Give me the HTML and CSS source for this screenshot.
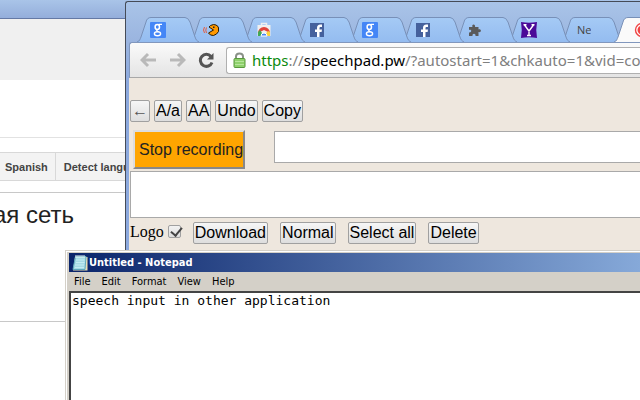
FILE: index.html
```html
<!DOCTYPE html>
<html lang="en">

<head>
    <meta charset="UTF-8" />
    <meta name="viewport" content="width=device-width, initial-scale=1.0" />
    <title>Speechpad</title>
    <link rel="stylesheet" href="styles.css">
</head>

<body>
    <svg class="defs" aria-hidden="true">
        <defs>
            <linearGradient id="tab-fill" x1="0" y1="0" x2="0" y2="1">
                <stop offset="0" stop-color="#a5caf5" />
                <stop offset="1" stop-color="#94bcf0" />
            </linearGradient>
            <symbol id="tab-shape" viewBox="0 0 62 25">
                <path d="M0 25C3 24 3 22 4 20L9 5Q10 .5 14 .5H48Q51 .5 53 5L58 20C59 23 60 24 62 25" />
            </symbol>
            <symbol id="google" viewBox="0 0 16 16">
                <rect width="16" height="16" rx="1" fill="#4486f6" />
                <g fill="none" stroke="#fff">
                    <ellipse cx="7.3" cy="4.9" rx="2.2" ry="2.5" stroke-width="1.5" />
                    <path d="M8.5 2.4H12M8 7.5C5.500 8.500 7 9.200 8.500 9.800" stroke-width="1.200" />
                    <ellipse cx="7.500" cy="11.700" rx="3.100" ry="2" stroke-width="1.400" />
                </g>
            </symbol>
            <symbol id="facebook" viewBox="0 0 16 16">
                <path d="M1 1H15V15H1Z" fill="#45619d" />
                <path d="M8 15V10H6V7.500H8V6C8 3.700 9.200 2.500 11.300 2.500H13V5H11.700C10.800 5 10.500 5.400 10.500 6.200V7.500H13L12.600 10H10.500V15Z" fill="#fff" />
            </symbol>
        </defs>
    </svg>

    <div class="desktop">
        <section class="window translator">
            <div class="translator-title"></div>
            <div class="translator-head"></div>
            <div class="translator-space"></div>
            <div class="languages">
                <button>Spanish</button>
                <button>Detect language</button>
            </div>
            <div class="translation">ая сеть</div>
        </section>

        <section class="window browser">
            <div class="tabs">
                <button class="tab" aria-label="Google"><svg class="shape"><use href="#tab-shape" /></svg><svg class="icon"><use href="#google" /></svg></button>
                <button class="tab" aria-label="Speech game"><svg class="shape"><use href="#tab-shape" /></svg><svg class="icon" viewBox="0 0 16 16">
                        <path d="M1.500 5Q-.5 8 1.500 11M3.500 5.500Q2 8 3.500 11" fill="none" stroke="#e65b3c" />
                        <path d="M15 4.500L13 3 10.500 2.500 7.500 3.500 6 5 10.500 8 5.500 11 7.500 13 10.500 13.500 13.500 12 15.500 9.500V6Z" fill="#f90" stroke="#2a1a00" />
                        <path d="M10 4.500H11.500V6H10Z" fill="#222" />
                    </svg></button>
                <button class="tab" aria-label="Web Store"><svg class="shape"><use href="#tab-shape" /></svg><svg class="icon" viewBox="0 0 16 16">
                        <path d="M5.500 3V1.500H10.500V3" fill="none" stroke="#eee" stroke-width="1.500" />
                        <path d="M1.500 3H14.500V14H1.500Z" fill="#f0f0f0" />
                        <path d="M2 11A6 6 0 0 1 14 11L8 8Z" fill="#e2453b" />
                        <path d="M2 14V10.500A6 6 0 0 1 4 8L8 14Z" fill="#42a854" />
                        <path d="M14 14V10A5 5 0 0 0 12 9L8 14Z" fill="#fbd13b" />
                        <path d="M5 14A3 3 0 0 1 11 14Z" fill="#4486f6" stroke="#fff" />
                    </svg></button>
                <button class="tab" aria-label="Facebook"><svg class="shape"><use href="#tab-shape" /></svg><svg class="icon"><use href="#facebook" /></svg></button>
                <button class="tab" aria-label="Google"><svg class="shape"><use href="#tab-shape" /></svg><svg class="icon"><use href="#google" /></svg></button>
                <button class="tab" aria-label="Facebook"><svg class="shape"><use href="#tab-shape" /></svg><svg class="icon"><use href="#facebook" /></svg></button>
                <button class="tab" aria-label="Extensions"><svg class="shape"><use href="#tab-shape" /></svg><svg class="icon" viewBox="0 0 16 16">
                        <path d="M1 5H4.500C3 1.500 8 1.500 7 5H10.500V7.500C13.500 6.500 14 11 10.500 10V14H7.500C8 11 4 11 4.500 14H1V10.500C4 11 4 7 1 8Z" fill="#5a5a5a" />
                    </svg></button>
                <button class="tab" aria-label="Yahoo"><svg class="shape"><use href="#tab-shape" /></svg><svg class="icon" viewBox="0 0 16 16">
                        <path d="M0 0Q8 1.500 16 0Q14.500 8 16 16Q8 14.500 0 16Q1.500 8 0 0Z" fill="#4b0a98" />
                        <path d="M3.500 3L8 9 12.500 3M8 8.500V13.500M2.500 2.800H5.500M10.500 2.800H13.500M6 13.500H10" fill="none" stroke="#fff" stroke-width="1.400" />
                    </svg></button>
                <button class="tab"><svg class="shape"><use href="#tab-shape" /></svg><span class="tab-text">New</span></button>
                <button class="tab active" aria-label="Speechpad"><svg class="shape"><use href="#tab-shape" /></svg><svg class="icon record" viewBox="0 0 16 16">
                        <circle cx="8" cy="8" r="6.500" fill="#fff" stroke="#f04444" stroke-width="1.400" />
                        <circle cx="8" cy="8" r="4.500" fill="#f04444" />
                    </svg></button>
            </div>

            <div class="navigation">
                <button class="nav" aria-label="Back"><svg viewBox="0 0 17 16"><path d="M16 8H2M8 2L2 8L8 14" /></svg></button>
                <button class="nav" aria-label="Forward"><svg viewBox="0 0 17 16"><path d="M1 8H15M9 2L15 8L9 14" /></svg></button>
                <button class="nav reload" aria-label="Reload"><svg viewBox="0 0 17 16"><path d="M13 4.500A6 6 0 1 0 14 10.500" /><path class="head" d="M15.500 1V7.500H9Z" /></svg></button>
                <div class="address">
                    <svg class="lock" viewBox="0 0 13 16">
                        <path d="M3 8V4.500Q3 1.500 6.500 1.500T10 4.500V8" fill="none" stroke="#8a9188" stroke-width="2" />
                        <rect x="1" y="6.500" width="11" height="9" rx="1" fill="#8fd16c" stroke="#58983d" />
                        <path d="M2 9.500H11M2 12.500H11" stroke="#b7e69c" />
                    </svg>
                    <div class="url" role="textbox" aria-label="Address" contenteditable="true" spellcheck="false"><span class="scheme">https</span>://<span class="host">speechpad.pw</span>/?autostart=1&amp;chkauto=1&amp;vid=co</div>
                </div>
            </div>

            <main class="page">
                <div class="row edit">
                    <button class="btn arrow">←</button>
                    <button class="btn">A/a</button>
                    <button class="btn">AA</button>
                    <button class="btn">Undo</button>
                    <button class="btn">Copy</button>
                </div>
                <div class="row record-row">
                    <button class="stop">Stop recording</button>
                    <input class="preview" type="text" aria-label="Recognized text">
                </div>
                <textarea class="result" aria-label="Result"></textarea>
                <div class="row actions">
                    <label class="logo">Logo <input type="checkbox" checked></label>
                    <button class="btn">Download</button>
                    <button class="btn">Normal</button>
                    <button class="btn">Select all</button>
                    <button class="btn">Delete</button>
                </div>
            </main>
        </section>

        <section class="window notepad">
            <div class="notepad-title">
                <svg class="notepad-icon" viewBox="0 0 16 16">
                    <path d="M3 2H15.500V15.500H1L3 2Z" fill="#e9dfb5" />
                    <path d="M3.500 1.500H14L13 14.500H1Z" fill="#a5dbe5" stroke="#5fa9bb" />
                    <path d="M4 5H12.500M4 7.500H12.500M3 10H12M3 12.500H12" stroke="#c4edf2" />
                    <path d="M4 0V3M6 0V3M8 0V3M10 0V3M12 0V3" stroke="#e8f4f5" />
                </svg>
                Untitled - Notepad
            </div>
            <div class="menu">
                <button>File</button>
                <button>Edit</button>
                <button>Format</button>
                <button>View</button>
                <button>Help</button>
            </div>
            <textarea class="document" aria-label="Document" spellcheck="false">speech input in other application</textarea>
        </section>
    </div>
</body>

</html>
```
FILE: styles.css
```css
* {
    box-sizing: border-box;
}

body {
    margin: 0;
}

button {
    margin: 0;
    padding: 0;
    border: 0;
    background: none;
    color: inherit;
    font: inherit;
    white-space: nowrap;
}

input,
textarea {
    margin: 0;
    border-radius: 0;
    outline: 0;
    resize: none;
}

.defs {
    position: absolute;
    width: 0;
    height: 0;
}

.desktop {
    position: relative;
    height: 100vh;
    overflow: hidden;
    background: #fff;
}

.window {
    position: absolute;
    right: 0;
    bottom: 0;
    overflow: hidden;
    display: flex;
    flex-direction: column;
}

/* translator */
.translator {
    left: 0;
    top: 0;
    font-family: "Liberation Sans", Arial, sans-serif;
}

.translator-title {
    height: 19px;
    background: linear-gradient(#a9c4e8, #94aedb);
    border-bottom: 1px solid #6479a5;
}

.translator-head {
    height: 61px;
    background: #f0f0f0;
}

.translator-space {
    height: 72px;
    padding-top: 57px;
}

.translator-space::after {
    content: "";
    display: block;
    border-top: 1px solid #e2e2e2;
}

.languages {
    display: flex;
    height: 29px;
    margin-bottom: 11px;
    background: #f3f3f3;
    border: solid #d8d8d8;
    border-width: 1px 0;
    font-size: 11px;
    font-weight: bold;
    color: #444;
}

.languages button {
    padding: 0 7px 0 5px;
    border-right: 1px solid #d8d8d8;
}

.languages button + button {
    padding-left: 8px;
}

.translation {
    height: 130px;
    border: solid #c8c8c8;
    border-width: 1px 0;
    padding-top: 8px;
    font-size: 24px;
    line-height: 28px;
    color: #222;
    text-indent: -7px;
}

/* browser */
.browser {
    left: 125px;
    top: 1px;
    background: linear-gradient(#a9c4e8, #9ab4df 40px, #8ca9de 80px);
    border: solid #454b57;
    border-width: 1px 0 0 1px;
    border-radius: 3px 0 0 0;
    padding-left: 3px;
}

.tabs {
    display: flex;
    height: 40px;
    padding: 15px 0 0 8px;
}

.tab {
    position: relative;
    flex: none;
    display: flex;
    align-items: center;
    width: 62px;
    height: 25px;
    margin-right: -9px;
    padding-left: 13px;
    z-index: 10;
}

.tab:nth-child(2) { z-index: 9; }
.tab:nth-child(3) { z-index: 8; }
.tab:nth-child(4) { z-index: 7; }
.tab:nth-child(5) { z-index: 6; }
.tab:nth-child(6) { z-index: 5; }
.tab:nth-child(7) { z-index: 4; }
.tab:nth-child(8) { z-index: 3; }
.tab:nth-child(9) { z-index: 2; }

.shape {
    position: absolute;
    left: 0;
    top: 0;
    width: 62px;
    height: 25px;
    fill: url(#tab-fill);
    stroke: #7890b8;
}

.tab.active {
    z-index: 11;
}

.active .shape {
    fill: #fafafa;
}

.icon {
    position: relative;
    width: 16px;
    height: 16px;
}

.record {
    margin-left: 7px;
}

.tab-text {
    position: relative;
    width: 14px;
    margin-left: 3px;
    overflow: hidden;
    font: 11px/16px "Open Sans", sans-serif;
    color: #444;
    text-align: left;
}

.navigation {
    display: flex;
    align-items: center;
    height: 36px;
    padding-left: 10px;
    background: linear-gradient(#fafafa, #e4e4e4);
    border: solid #8197bd;
    border-width: 1px 0 1px 1px;
    border-bottom-color: #a8a8a8;
    border-radius: 3px 0 0 0;
}

.nav {
    flex: none;
    width: 17px;
    height: 16px;
    margin-right: 12px;
}

.nav svg {
    display: block;
    width: 17px;
    height: 16px;
    fill: none;
    stroke: #b9b9b9;
    stroke-width: 3;
}

.nav.reload svg {
    stroke: #555;
}

.nav .head {
    fill: #555;
    stroke: none;
}

.nav.reload {
    margin-right: 11px;
}

.address {
    flex: 1;
    display: flex;
    align-items: center;
    min-width: 0;
    height: 27px;
    padding-left: 6px;
    overflow: hidden;
    background: #fff;
    border: 1px solid #b0b0b0;
    border-right: 0;
    border-radius: 3px 0 0 3px;
}

.lock {
    flex: none;
    width: 13px;
    height: 16px;
    margin-right: 6px;
}

.url {
    flex: 1;
    min-width: 0;
    overflow: hidden;
    white-space: nowrap;
    font: 15px/24px "Noto Sans", sans-serif;
    color: #808080;
    outline: 0;
}

.scheme {
    color: #0b8a0b;
}

.host {
    color: #000;
}

.page {
    flex: 1;
    display: flex;
    flex-direction: column;
    padding: 22px 0 0 1px;
    background: #eee7de;
    font: 16px/20px "Liberation Serif", "Times New Roman", serif;
}

.row {
    display: flex;
}

.edit {
    gap: 4px;
}

.btn {
    height: 22px;
    padding: 0 1px;
    border: 1px solid #a0a0a0;
    border-radius: 2px;
    background: linear-gradient(#f6f6f6, #dedede);
    font: 16px/20px "Liberation Sans", Arial, sans-serif;
    color: #000;
}

.arrow {
    color: #555;
}

.record-row {
    height: 49px;
    padding: 8px 0 0 3px;
    gap: 29px;
    align-items: flex-start;
}

.stop {
    height: 39px;
    padding: 0 0 0 4px;
    background: #ffa500;
    border: 2px solid;
    border-color: #ddd #888 #888 #ddd;
    font: 16px/20px "Liberation Sans", Arial, sans-serif;
    color: #222;
}

.preview {
    flex: 1;
    min-width: 0;
    height: 32px;
    margin-top: 1px;
    border: 1px solid #a9a9a9;
    border-right: 0;
}

.result {
    height: 47px;
    border: 1px solid #a9a9a9;
    border-right: 0;
}

.actions {
    padding-top: 4px;
    gap: 12px;
}

.logo {
    display: flex;
    align-items: flex-start;
    gap: 4px;
}

.logo input {
    appearance: none;
    width: 13px;
    height: 13px;
    margin-top: 3px;
    border: 1px solid #a0a0a0;
    border-radius: 2px;
    background: linear-gradient(#f2f2f2, #dedede);
}

.logo input:checked::after {
    content: "";
    display: block;
    width: 5px;
    height: 9px;
    margin: -1px 0 0 4px;
    border: solid #444;
    border-width: 0 2px 2px 0;
    transform: rotate(40deg);
}

/* notepad */
.notepad {
    left: 65px;
    top: 250px;
    padding: 2px 0 0 2px;
    background: #d4d0c8;
    border: solid #d4d0c8;
    border-width: 1px 0 0 1px;
    box-shadow: inset 1px 1px #fff;
    font-family: "DejaVu Sans Condensed", "DejaVu Sans", sans-serif;
}

.notepad-title {
    display: flex;
    align-items: center;
    flex: none;
    gap: 1px;
    height: 19px;
    margin-left: 1px;
    padding-left: 3px;
    background: linear-gradient(90deg, #0a246a, #86a9d9);
    font-size: 11px;
    font-weight: bold;
    color: #fff;
}

.notepad-icon {
    width: 16px;
    height: 16px;
}

.menu {
    display: flex;
    flex: none;
    gap: 11px;
    height: 19px;
    padding-left: 6px;
    font-size: 11px;
    color: #000;
}

.document {
    flex: 1;
    margin-left: 1px;
    padding: 0 1px;
    border: 2px solid #444;
    border-width: 2px 0 0 2px;
    background: #fff;
    font: 13px/16px "DejaVu Sans Mono", monospace;
    color: #000;
}
```
